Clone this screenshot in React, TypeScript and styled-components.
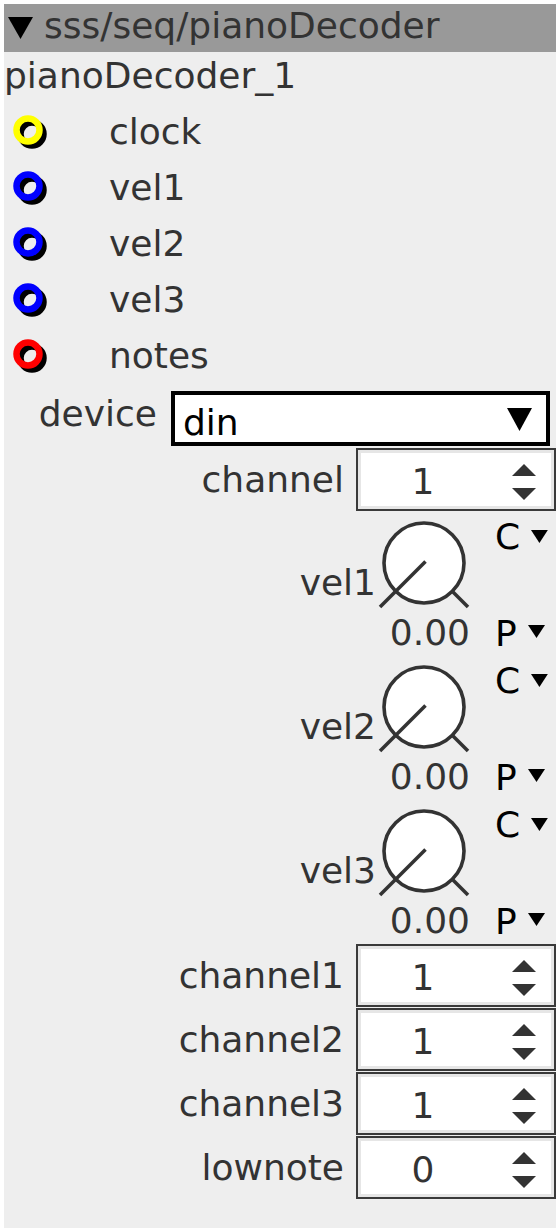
import styled, { createGlobalStyle } from "styled-components";

const GlobalStyle = createGlobalStyle`
  html, body {
    margin: 0;
    padding: 0;
    background: #fff;
  }
`;

const Panel = styled.div`
  margin: 4px;
  width: 552px;
  height: 1224px;
  background: #eeeeee;
  display: flex;
  flex-direction: column;
  font-family: "DejaVu Sans", "Noto Sans", sans-serif;
  font-size: 36px;
  line-height: 36px;
  color: #333;
`;

const Header = styled.div`
  height: 48px;
  flex: none;
  background: #999999;
  display: flex;
  align-items: flex-start;
  padding-left: 4px;
`;

const HeaderArrow = styled.svg`
  margin-top: 13px;
  margin-right: 11px;
  flex: none;
`;

const HeaderTitle = styled.span`
  margin-top: 4px;
  white-space: nowrap;
`;

const InstanceName = styled.div`
  height: 52px;
  flex: none;
  padding-top: 6px;
  box-sizing: border-box;
`;

const InletRow = styled.div`
  height: 56px;
  flex: none;
  display: flex;
  align-items: center;
  padding-left: 6px;
  gap: 59px;
`;

const DeviceRow = styled.div`
  height: 63px;
  flex: none;
  display: flex;
  justify-content: flex-end;
  align-items: flex-start;
  padding-right: 6px;
  gap: 14px;
`;

const FieldLabel = styled.span<{ $top: number }>`
  margin-top: ${(p) => p.$top}px;
  white-space: nowrap;
`;

const Dropdown = styled.div`
  margin-top: 7px;
  width: 379px;
  height: 55px;
  box-sizing: border-box;
  border: 4px solid #000;
  background: #fff;
  color: #000;
  display: flex;
  justify-content: space-between;
  align-items: flex-start;
  padding: 0 14px 0 8px;
`;

const DropText = styled.span`
  margin-top: 10px;
`;

const DropArrow = styled.svg`
  margin-top: 13px;
`;

const SpinRow = styled.div`
  height: 64px;
  flex: none;
  box-sizing: border-box;
  padding-top: 1px;
  display: flex;
  justify-content: flex-end;
  align-items: center;
  gap: 12px;
`;

const Spinner = styled.div`
  width: 200px;
  height: 63px;
  box-sizing: border-box;
  border: 2px solid #3a3a3a;
  background: #fff;
  box-shadow: inset 0 0 0 3px #e6e6e6;
  display: flex;
  align-items: flex-start;
`;

const SpinValue = styled.span`
  width: 130px;
  text-align: center;
  margin-top: 14px;
`;

const SpinArrows = styled.svg`
  margin-top: 14px;
  margin-left: 24px;
`;

const KnobRow = styled.div`
  height: 144px;
  flex: none;
  display: flex;
  justify-content: flex-end;
  align-items: flex-start;
  padding-right: 8px;
`;

const KnobCol = styled.div`
  width: 96px;
  display: flex;
  flex-direction: column;
`;

const KnobDial = styled.svg`
  margin-top: 8px;
`;

const KnobValue = styled.span`
  margin-top: 4px;
  text-align: right;
  padding-right: 2px;
`;

const ModCol = styled.div`
  margin-left: 23px;
  width: 53px;
  display: flex;
  flex-direction: column;
`;

const ModItem = styled.div<{ $top: number }>`
  margin-top: ${(p) => p.$top}px;
  display: flex;
  align-items: flex-start;
  gap: 11px;
  color: #000;
`;

const ModArrow = styled.svg<{ $top: number }>`
  margin-top: ${(p) => p.$top}px;
`;

const inlets = [
  { name: "clock", color: "#ffff00" },
  { name: "vel1", color: "#0000ff" },
  { name: "vel2", color: "#0000ff" },
  { name: "vel3", color: "#0000ff" },
  { name: "notes", color: "#ff0000" },
];

const Ring = ({ color }: { color: string }) => (
  <svg width="40" height="40" viewBox="0 0 40 40">
    <circle cx="22" cy="22" r="11.5" fill="none" stroke="#000" strokeWidth="6.5" />
    <circle cx="18" cy="18" r="11.5" fill="none" stroke={color} strokeWidth="6.5" />
  </svg>
);

const Arrows = () => (
  <SpinArrows width="24" height="36" viewBox="0 0 24 36">
    <polygon points="0,12 12,0 24,12" fill="#333" />
    <polygon points="0,24 24,24 12,36" fill="#333" />
  </SpinArrows>
);

const NumberField = ({ label, value }: { label: string; value: string }) => (
  <SpinRow>
    <FieldLabel $top={0}>{label}</FieldLabel>
    <Spinner>
      <SpinValue>{value}</SpinValue>
      <Arrows />
    </Spinner>
  </SpinRow>
);

const Knob = ({ label }: { label: string }) => (
  <KnobRow>
    <FieldLabel $top={53.5}>{label}</FieldLabel>
    <KnobCol>
      <KnobDial width="96" height="92" viewBox="0 0 96 92">
        <circle cx="48" cy="44" r="40" fill="#fff" stroke="#333" strokeWidth="3.6" />
        <line x1="4" y1="88" x2="49.5" y2="42.5" stroke="#333" strokeWidth="3.6" />
        <line x1="76" y1="72" x2="92" y2="88" stroke="#333" strokeWidth="3.6" />
      </KnobDial>
      <KnobValue>0.00</KnobValue>
    </KnobCol>
    <ModCol>
      <ModItem $top={7.5}>
        C
        <ModArrow $top={11.5} width="17" height="13" viewBox="0 0 17 13">
          <polygon points="0,0 17,0 8.5,13" fill="#000" />
        </ModArrow>
      </ModItem>
      <ModItem $top={61}>
        P
        <ModArrow $top={9} width="17" height="13" viewBox="0 0 17 13">
          <polygon points="0,0 17,0 8.5,13" fill="#000" />
        </ModArrow>
      </ModItem>
    </ModCol>
  </KnobRow>
);

const App = () => {
  return (
    <>
      <GlobalStyle />
      <Panel>
        <Header>
          <HeaderArrow width="25" height="22" viewBox="0 0 25 22">
            <polygon points="0,0 25,0 12.5,22" fill="#000" />
          </HeaderArrow>
          <HeaderTitle>sss/seq/pianoDecoder</HeaderTitle>
        </Header>
        <InstanceName>pianoDecoder_1</InstanceName>
        {inlets.map((inlet) => (
          <InletRow key={inlet.name}>
            <Ring color={inlet.color} />
            <span>{inlet.name}</span>
          </InletRow>
        ))}
        <DeviceRow>
          <FieldLabel $top={11.5}>device</FieldLabel>
          <Dropdown>
            <DropText>din</DropText>
            <DropArrow width="25" height="23" viewBox="0 0 25 23">
              <polygon points="0,0 25,0 12.5,23" fill="#000" />
            </DropArrow>
          </Dropdown>
        </DeviceRow>
        <NumberField label="channel" value="1" />
        <Knob label="vel1" />
        <Knob label="vel2" />
        <Knob label="vel3" />
        <NumberField label="channel1" value="1" />
        <NumberField label="channel2" value="1" />
        <NumberField label="channel3" value="1" />
        <NumberField label="lownote" value="0" />
      </Panel>
    </>
  );
};

export default App;
